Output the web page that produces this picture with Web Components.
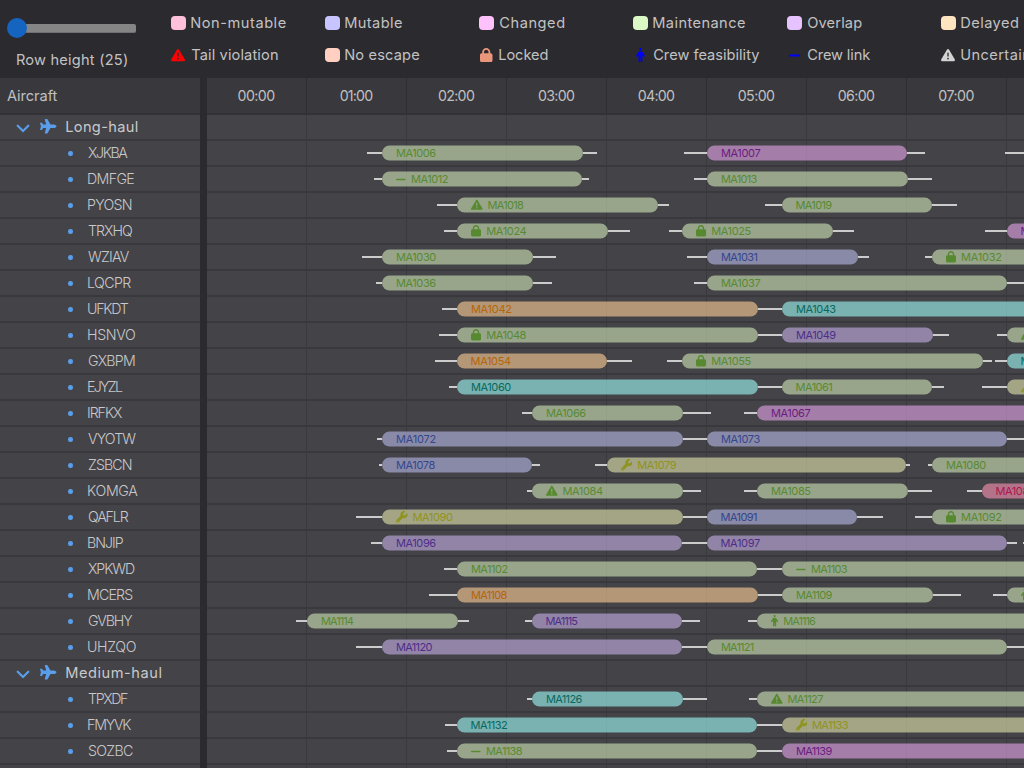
<!DOCTYPE html>
<html lang="en">
<head>
<meta charset="utf-8">
<title>Fleet schedule</title>
<style>
html,body{margin:0;height:100%;overflow:hidden;background:#2b2a2f}
</style>
</head>
<body>
<fleet-app></fleet-app>
<script>
const ICONS = {
  plane: ['0 0 576 512', '<path d="M482.3 192c34.2 0 93.7 29 93.7 64c0 36-59.5 64-93.7 64l-116.6 0L265.2 495.9c-5.7 10-16.3 16.1-27.8 16.1l-56.2 0c-10.6 0-18.3-10.2-15.4-20.4l49-171.6L112 320 68.8 377.6c-3 4-7.8 6.4-12.8 6.4l-42 0c-7.8 0-14-6.3-14-14c0-1.3 .2-2.6 .5-3.9L32 256 .5 145.9c-.4-1.3-.5-2.6-.5-3.9c0-7.8 6.3-14 14-14l42 0c5 0 9.8 2.4 12.8 6.4L112 192l102.9 0-49-171.6C162.9 10.2 170.6 0 181.2 0l56.2 0c11.5 0 22.1 6.2 27.8 16.1L365.7 192l116.6 0z"/>'],
  warn: ['0 0 512 512', '<path d="M256 32c14.2 0 27.3 7.5 34.5 19.8l216 368c7.3 12.4 7.3 27.7 .2 40.1S486.3 480 472 480L40 480c-14.3 0-27.6-7.7-34.7-20.1s-7-27.8 .2-40.1l216-368C228.7 39.5 241.8 32 256 32zm0 128c-13.3 0-24 10.7-24 24l0 112c0 13.3 10.7 24 24 24s24-10.7 24-24l0-112c0-13.3-10.7-24-24-24zm32 224a32 32 0 1 0 -64 0 32 32 0 1 0 64 0z"/>'],
  lock: ['0 0 448 512', '<path d="M144 144l0 48 160 0 0-48c0-44.2-35.8-80-80-80s-80 35.8-80 80zM80 192l0-48C80 64.5 144.5 0 224 0s144 64.5 144 144l0 48 16 0c35.3 0 64 28.7 64 64l0 192c0 35.3-28.7 64-64 64L64 512c-35.3 0-64-28.7-64-64L0 256c0-35.3 28.7-64 64-64l16 0z"/>'],
  wrench: ['0 0 512 512', '<path d="M352 320c88.4 0 160-71.6 160-160c0-15.3-2.2-30.1-6.2-44.2c-3.1-10.8-16.4-13.2-24.3-5.3l-76.8 76.8c-3 3-7.1 4.7-11.3 4.7L336 192c-8.8 0-16-7.2-16-16l0-57.4c0-4.2 1.7-8.3 4.7-11.3l76.8-76.8c7.9-7.9 5.4-21.2-5.3-24.3C382.1 2.2 367.3 0 352 0C263.6 0 192 71.6 192 160c0 19.1 3.4 37.5 9.5 54.5L19.9 396.1C7.2 408.8 0 426.1 0 444.1C0 481.6 30.4 512 67.9 512c18 0 35.3-7.2 48-19.9L297.5 310.5c17 6.2 35.4 9.5 54.5 9.5zM80 408a24 24 0 1 1 0 48 24 24 0 1 1 0-48z"/>'],
  crew: ['0 0 320 512', '<path d="M112 48a48 48 0 1 1 96 0 48 48 0 1 1 -96 0zm40 304l0 128c0 17.7-14.3 32-32 32s-32-14.3-32-32l0-223.1L59.4 304.5c-9.1 15.1-28.8 20-43.9 10.9s-20-28.8-10.9-43.9l58.3-97c17.4-28.9 48.6-46.6 82.3-46.6l29.7 0c33.7 0 64.9 17.7 82.3 46.6l58.3 97c9.1 15.1 4.2 34.8-10.9 43.9s-34.8 4.2-43.9-10.9L232 256.9 232 480c0 17.7-14.3 32-32 32s-32-14.3-32-32l0-128-16 0z"/>'],
  link: ['0 0 448 512', '<rect y="216" width="448" height="80" rx="36"/>'],
  chevron: ['0 0 14 9', '<path d="M1.7 1.7 7 7 12.3 1.7" fill="none" stroke="currentColor" stroke-width="2.2" stroke-linecap="round"/>']
};

customElements.define('glyph-icon', class extends HTMLElement {
  connectedCallback() {
    const [box, body] = ICONS[this.getAttribute('name')];
    this.attachShadow({mode:'open'}).innerHTML =
      `<style>:host{display:block;flex:none}svg{display:block;width:100%;height:100%;fill:currentColor}</style>
       <svg viewBox="${box}">${body}</svg>`;
  }
});

/* A single line of text, tracked so that its ink spans exactly the "w" attribute. */
const pen = document.createElement('canvas').getContext('2d');
customElements.define('fit-text', class extends HTMLElement {
  connectedCallback() {
    const root = this.attachShadow({mode:'open'});
    root.innerHTML = `<style>:host{display:block;flex:none;white-space:nowrap}span{display:block}</style><span></span>`;
    const span = root.lastElementChild;
    const text = this.getAttribute('text'), w = +this.getAttribute('w');
    span.textContent = text;
    const cs = getComputedStyle(this);
    pen.font = `${cs.fontWeight} ${cs.fontSize} ${cs.fontFamily}`;
    const m = pen.measureText(text);
    const ink = m.actualBoundingBoxRight + m.actualBoundingBoxLeft;
    span.style.letterSpacing = ((w - ink) / (text.length - 1)).toFixed(3) + 'px';
    span.style.marginLeft = (m.actualBoundingBoxLeft - .1).toFixed(2) + 'px';
    this.style.width = w + 'px';
  }
});

customElements.define('row-slider', class extends HTMLElement {
  connectedCallback() {
    this.attachShadow({mode:'open'}).innerHTML = `<style>
      :host{display:block;width:171px;flex:none;box-sizing:border-box;padding:18px 0 0 7px}
      .bar{display:flex;align-items:center;height:20px}
      i{width:20px;height:20px;border-radius:50%;background:#1565c0;flex:none;order:1;z-index:1}
      b{width:116px;height:9px;margin-left:-7px;background:#858585;border-radius:0 2px 2px 0;order:2;box-sizing:border-box;border-bottom:1px solid #707072}
      fit-text{margin:12px 0 0 10px;line-height:20px}
    </style><div class="bar"><b></b><i></i></div><fit-text text="Row height (25)" w="110"></fit-text>`;
  }
});

customElements.define('legend-item', class extends HTMLElement {
  connectedCallback() {
    const a = n => this.getAttribute(n), icon = a('icon');
    const size = {warn:'14px;height:14px', lock:'12.5px;height:14.3px', crew:'9px;height:14px', link:'11.5px;height:13px'}[icon];
    this.attachShadow({mode:'open'}).innerHTML = `<style>
      :host{display:flex;align-items:center}
      .box{width:20px;flex:none;display:flex}
      i{width:14.5px;height:14.5px;border-radius:4px;background:${a('color')}}
      glyph-icon{color:${a('color')};width:${size};margin-left:${{warn:0,lock:.8,crew:2.5,link:1.5}[icon]}px}
      fit-text{line-height:20px}
    </style><div class="box">${icon ? `<glyph-icon name="${icon}"></glyph-icon>` : '<i></i>'}</div>
    <fit-text text="${a('label')}" w="${a('w')}"></fit-text>`;
  }
});

const LEGEND = [
  ['Non-mutable',94.5,'#ffc1d9'],['Mutable',56.7,'#c7c4ff'],['Changed',65,'#ffc1fb'],['Maintenance',91.7,'#daf9c5'],['Overlap',55,'#e6c3ff'],['Delayed',56.7,'#ffe4c0'],
  ['Tail violation',86.7,'#f00','warn'],['No escape',74,'#ffd0c1'],['Locked',48.3,'#e9967a','lock'],['Crew feasibility',106,'#00f','crew'],['Crew link',63,'#00f','link'],['Uncertain',69,'#d3d3d3','warn']];

customElements.define('schedule-toolbar', class extends HTMLElement {
  connectedCallback() {
    this.attachShadow({mode:'open'}).innerHTML = `<style>
      :host{display:flex;height:78px;flex:none;overflow:hidden;font-size:14.6px;color:#c2c2c3}
      .legend{display:grid;grid-template-columns:repeat(6,154px);grid-template-rows:32px 32px;padding-top:7px;flex:none;padding-left:.3px;height:65px;align-content:start}
    </style><row-slider></row-slider><div class="legend">${LEGEND.map(([l,w,c,i]) =>
      `<legend-item label="${l}" w="${w}" color="${c}" ${i ? `icon="${i}"` : ''}></legend-item>`).join('')}</div>`;
  }
});

/* Fill and text colour of each kind of flight. */
const TONES = {
  g:['208,232,184','#578a30'], p:['228,167,235','#6c1c80'], i:['183,187,234','#35468d'], o:['255,209,152','#b66508'],
  t:['156,254,247','#07695f'], d:['198,177,232','#4f2d8a'], l:['228,232,174','#8f9320'], r:['253,150,182','#ae1450']
};
const ICON_BOX = {warn:[11.6,11.6,5], lock:[10,11.5,5.3], wrench:[11.6,11.6,5], crew:[7.2,11.5,5.2], link:[9.6,11,5.6]};

customElements.define('flight-bar', class extends HTMLElement {
  connectedCallback() {
    const a = n => this.getAttribute(n), icon = a('icon'), n = a('num');
    const [fill, ink] = TONES[a('tone')];
    const ones = n.split('1').length - 1, sevens = n.split('7').length - 1;
    const w = 40.4 - 3.8 * (ones - 1) - 0.9 * sevens;
    const box = ICON_BOX[icon];
    this.attachShadow({mode:'open'}).innerHTML = `<style>
      :host{display:flex;align-items:center;flex:none;height:24px}
      s{height:2px;background:#ccc;flex:none}
      .bar{position:relative;display:flex;align-items:center;width:${a('len')}px;height:16px;flex:none;box-sizing:border-box;padding-left:14px;color:${ink};font-size:11px}
      .bar::before{content:"";position:absolute;inset:0 0 auto;height:15px;border-radius:7.5px;background:rgba(${fill},.6);transform:translateY(.5px)}
      fit-text,glyph-icon{position:relative}
      fit-text{line-height:16px}
    </style><s style="width:${a('pre')}px"></s><div class="bar">${box ?
      `<glyph-icon name="${icon}" style="width:${box[0]}px;height:${box[1]}px;margin-right:${box[2]}px"></glyph-icon>` : ''}
      ${n ? `<fit-text text="MA${n}" w="${w.toFixed(1)}"></fit-text>` : ''}</div><s style="width:${a('post')}px"></s>`;
  }
});

/* Each flight: tail start, bar start, bar end, tail end, tone, number, icon. */
const ROWS = [
 {group:'Long-haul',w:71.5},
 {name:'XJKBA',w:40.3,f:[[367,382,583,597,'g',1006],[683.5,707,907,925,'p',1007],[1005,1032,1232,1240,'g','']]},
 {name:'DMFGE',w:46.3,f:[[373.5,382,582,589,'g',1012,'link'],[693.5,707,908,932,'g',1013]]},
 {name:'PYOSN',w:43.7,f:[[437,457,657.5,669,'g',1018,'warn'],[765,781.7,932.5,957,'g',1019]]},
 {name:'TRXHQ',w:44,f:[[443.5,457,607.5,630,'g',1024,'lock'],[668.5,682,832.5,854,'g',1025,'lock'],[985,1006.7,1207,1220,'p',1026]]},
 {name:'WZIAV',w:41.7,f:[[362,382,532.5,556,'g',1030],[687,707,857.5,869,'i',1031],[925,931.7,1132,1140,'g',1032,'lock']]},
 {name:'LQCPR',w:43.3,f:[[375.5,382,533,552,'g',1036],[693.5,707,1007,1030,'g',1037]]},
 {name:'UFKDT',w:40.7,f:[[442,457,757.5,782,'o',1042],[782,782,1082,1090,'t',1043]]},
 {name:'HSNVO',w:47,f:[[438.5,457,758,782,'g',1048,'lock'],[782,782,932.5,949,'d',1049],[996.5,1006.7,1207,1220,'g',1050,'warn']]},
 {name:'GXBPM',w:47,f:[[435,456.7,607.5,632,'o',1054],[667,682,983,992,'g',1055,'lock'],[995,1006.7,1207,1220,'t',1056]]},
 {name:'EJYZL',w:35,f:[[448.5,457,758,782,'t',1060],[782,781.7,932,944,'g',1061],[981.5,1006.7,1207,1220,'l',1062,'wrench']]},
 {name:'IRFKX',w:34,f:[[522,532,682.5,711,'g',1066],[743.5,757,1057,1070,'p',1067]]},
 {name:'VYOTW',w:48.3,f:[[377,382,683,707,'i',1072],[707,707,1007,1030,'i',1073]]},
 {name:'ZSBCN',w:43.7,f:[[378.5,382,532,540,'i',1078],[595,606.7,906.5,910,'l',1079,'wrench'],[928.5,932,1132,1140,'g',1080]]},
 {name:'KOMGA',w:50.3,f:[[527,532,682.5,701,'g',1084,'warn'],[743.5,757,908,932,'g',1085],[966.5,981.5,1182,1190,'r',1086]]},
 {name:'QAFLR',w:40.7,f:[[355.5,382,683,707,'l',1090,'wrench'],[707,706.6,857,883,'i',1091],[915,931.7,1132,1140,'g',1092,'lock']]},
 {name:'BNJIP',w:35.7,f:[[370.5,382,682.3,707,'d',1096],[707,706.6,1007.4,1017,'d',1097],[1023,1032,1132,1140,'g','']]},
 {name:'XPKWD',w:47,f:[[443.5,457,757,782,'g',1102],[782,782,1082,1090,'g',1103,'link']]},
 {name:'MCERS',w:45.3,f:[[428.5,457,758,782,'o',1108],[782,782,932.7,961,'g',1109],[993.5,1007,1207,1220,'g',1110,'crew']]},
 {name:'GVBHY',w:45.3,f:[[295.5,307,457.7,469,'g',1114],[525,531.6,682,700,'d',1115],[748.5,757,1057,1070,'g',1116,'crew']]},
 {name:'UHZQO',w:47.7,f:[[355.5,382,682.3,707,'d',1120],[707,707,1007,1030,'g',1121]]},
 {group:'Medium-haul',w:95.3},
 {name:'TPXDF',w:40,f:[[527,532,683,707,'t',1126],[748.5,757,1057,1070,'g',1127,'warn']]},
 {name:'FMYVK',w:43.3,f:[[445,456.6,757,782,'t',1132],[782,781.6,1082,1090,'l',1133,'wrench']]},
 {name:'SOZBC',w:45,f:[[447,457,757,782,'g',1138,'link'],[782,782,1082,1090,'p',1139]]},
 {blank:true}
];
const TRACK_X = 207;

customElements.define('aircraft-row', class extends HTMLElement {
  connectedCallback() {
    const g = this.hasAttribute('group');
    this.attachShadow({mode:'open'}).innerHTML = `<style>
      :host{display:flex;align-items:center;height:24px;border-bottom:2px solid #39383d;background:#444348}
      fit-text{line-height:24px}
      .chev{width:14px;height:9px;margin:2px 0 0 16.4px}
      .plane{width:16.5px;height:14.6px;margin:-1px 9.6px 0 9.8px}
      glyph-icon{color:#5a9ee9}
      i{width:4.6px;height:4.6px;border-radius:50%;background:#5a9ee9;margin:1px 15.5px 0 68px}
    </style>${g ? '<glyph-icon class="chev" name="chevron"></glyph-icon><glyph-icon class="plane" name="plane"></glyph-icon>' : '<i></i>'}
    <fit-text text="${this.getAttribute('label')}" w="${this.getAttribute('w')}"></fit-text>`;
  }
});

customElements.define('track-row', class extends HTMLElement {
  connectedCallback() {
    let x = TRACK_X;
    const flights = (ROWS[this.getAttribute('index')].f || []).map(([ts,bs,be,te,tone,num,icon]) => {
      const gap = Math.min(ts, bs) - x; x = te;
      return `<flight-bar style="margin-left:${gap}px" pre="${Math.max(0, bs-ts)}" len="${be-bs}" post="${te-be}" tone="${tone}" num="${num}" ${icon ? `icon="${icon}"` : ''}></flight-bar>`;
    }).join('');
    this.attachShadow({mode:'open'}).innerHTML = `<style>
      :host{display:flex;height:24px;overflow:hidden;border-bottom:2px solid #39383d;
        background:repeating-linear-gradient(90deg,#444348 0 99px,#3a393e 99px 100px)}
    </style>${flights}`;
  }
});

customElements.define('aircraft-list', class extends HTMLElement {
  connectedCallback() {
    this.attachShadow({mode:'open'}).innerHTML = `<style>
      :host{display:block;width:200px;flex:none;color:#c9c9cb}
      header{height:35px;border-bottom:2px solid #323136;background:#39383d;padding-left:7.1px;display:flex;align-items:center;color:#c0c0c1;font-size:14.6px}
      header fit-text{line-height:34px;padding-top:1px}
      aircraft-row{font-size:14.6px}
      aircraft-row:not([group]){font-size:14.2px;font-weight:300}
    </style><header><fit-text text="Aircraft" w="50.5"></fit-text></header>${ROWS.map(r => r.blank
      ? '<div style="height:30px;background:#444348"></div>'
      : `<aircraft-row ${r.group ? 'group' : ''} label="${r.group || r.name}" w="${r.w}"></aircraft-row>`).join('')}`;
  }
});

customElements.define('time-grid', class extends HTMLElement {
  connectedCallback() {
    const widths = [37.7,33.5,37,37,37.3,37.3,37.3,36.3];
    this.attachShadow({mode:'open'}).innerHTML = `<style>
      :host{display:block;flex:1;min-width:0;overflow:hidden}
      header{display:flex;height:35px;border-bottom:2px solid #323136;background:#39383d;overflow:hidden;font-size:14.2px;color:#c0c0c1}
      .h{width:100px;box-sizing:border-box;flex:none;display:flex;align-items:center;justify-content:center;border-right:1px solid #2e2d32}
      fit-text{line-height:35px}
    </style><header>${widths.map((w,i) => `<div class="h"><fit-text text="0${i}:00" w="${w}"></fit-text></div>`).join('')}</header>
    ${ROWS.map((r,i) => `<track-row index="${i}"></track-row>`).join('')}`;
  }
});

customElements.define('fleet-app', class extends HTMLElement {
  connectedCallback() {
    this.attachShadow({mode:'open'}).innerHTML = `<style>
      :host{display:flex;flex-direction:column;width:1024px;height:768px;overflow:hidden;background:#2b2a2f;font-family:Inter,"Open Sans",sans-serif;font-size:14px}
      main{display:flex;flex:1;min-height:0;overflow:hidden;gap:7px}
    </style><schedule-toolbar></schedule-toolbar><main><aircraft-list></aircraft-list><time-grid></time-grid></main>`;
  }
});
</script>
</body>
</html>
